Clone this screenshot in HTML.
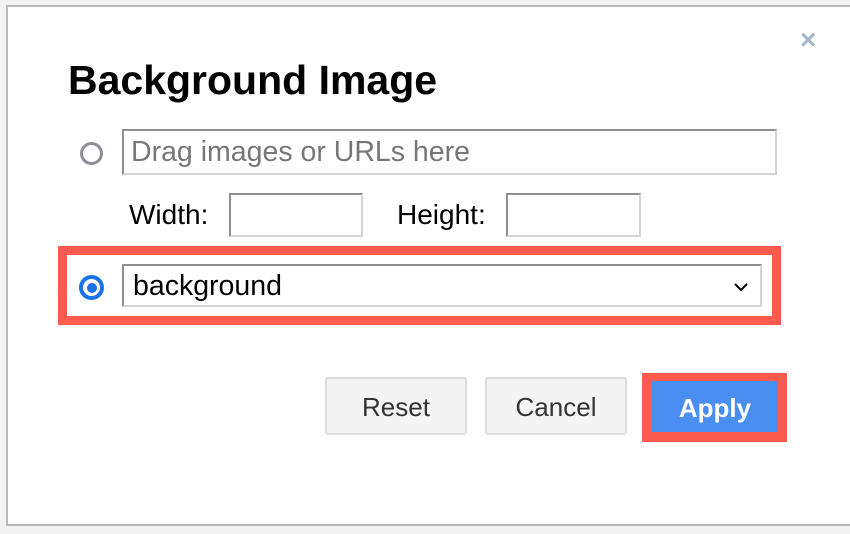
<!DOCTYPE html><html><head><style>
body{margin:0;width:850px;height:534px;background:#f2f2f2;position:relative;overflow:hidden;font-family:"Liberation Sans",sans-serif}
.dlg{position:absolute;left:6px;top:5px;width:846px;height:521px;background:#fff;border:2px solid #b8b8b8;box-sizing:border-box}
.a{position:absolute;white-space:nowrap}
.inp{position:absolute;box-sizing:border-box;border:2px solid #d4d4d4;border-top-color:#8f8f8f;border-left-color:#8f8f8f;background:#fff}
.btn{position:absolute;box-sizing:border-box;background:#f4f4f4;border:2px solid #dcdcdc;border-radius:3px;font-size:26px;color:#333;text-align:center}
</style></head><body>
<div class="dlg"></div>
<div class="a" style="left:800px;top:24px;font-size:28px;color:#a9b6c8;font-weight:bold">×</div>
<div class="a" style="left:68px;top:57px;font-size:41px;font-weight:bold;color:#000">Background Image</div>
<div class="a" style="left:80px;top:142px;width:17px;height:17px;border:3px solid #8e8e99;border-radius:50%"></div>
<div class="inp" style="left:122px;top:129px;width:655px;height:46px"></div>
<div class="a" style="left:131px;top:136px;font-size:28.5px;color:#777">Drag images or URLs here</div>
<div class="a" style="left:129px;top:199px;font-size:28px;color:#000">Width:</div>
<div class="inp" style="left:229px;top:193px;width:134px;height:44px"></div>
<div class="a" style="left:397px;top:199px;font-size:28px;color:#000">Height:</div>
<div class="inp" style="left:506px;top:193px;width:135px;height:44px"></div>
<div class="a" style="left:58px;top:246px;width:723px;height:79px;box-sizing:border-box;border:9px solid #fe5a4e"></div>
<div class="a" style="left:79px;top:275px;width:25px;height:25px;box-sizing:border-box;border:4px solid #1a73e8;border-radius:50%"><div style="margin:3.5px;width:10px;height:10px;border-radius:50%;background:#1a73e8"></div></div>
<div class="inp" style="left:122px;top:264px;width:640px;height:43px;border-width:2px"></div>
<div class="a" style="left:133px;top:270px;font-size:28.5px;color:#000">background</div>
<svg class="a" style="left:733px;top:281px" width="16" height="12"><path d="M2 3L8 9L14 3" fill="none" stroke="#000" stroke-width="2"/></svg>
<div class="btn" style="left:325px;top:377px;width:142px;height:58px;line-height:56px">Reset</div>
<div class="btn" style="left:485px;top:377px;width:142px;height:58px;line-height:56px">Cancel</div>
<div class="a" style="left:642px;top:373px;width:145px;height:69px;background:#fe5a4e"></div>
<div class="a" style="left:652px;top:381px;width:126px;height:51px;background:#4a8ef2;color:#fff;font-size:26px;font-weight:bold;text-align:center;line-height:54px">Apply</div>
</body></html>
